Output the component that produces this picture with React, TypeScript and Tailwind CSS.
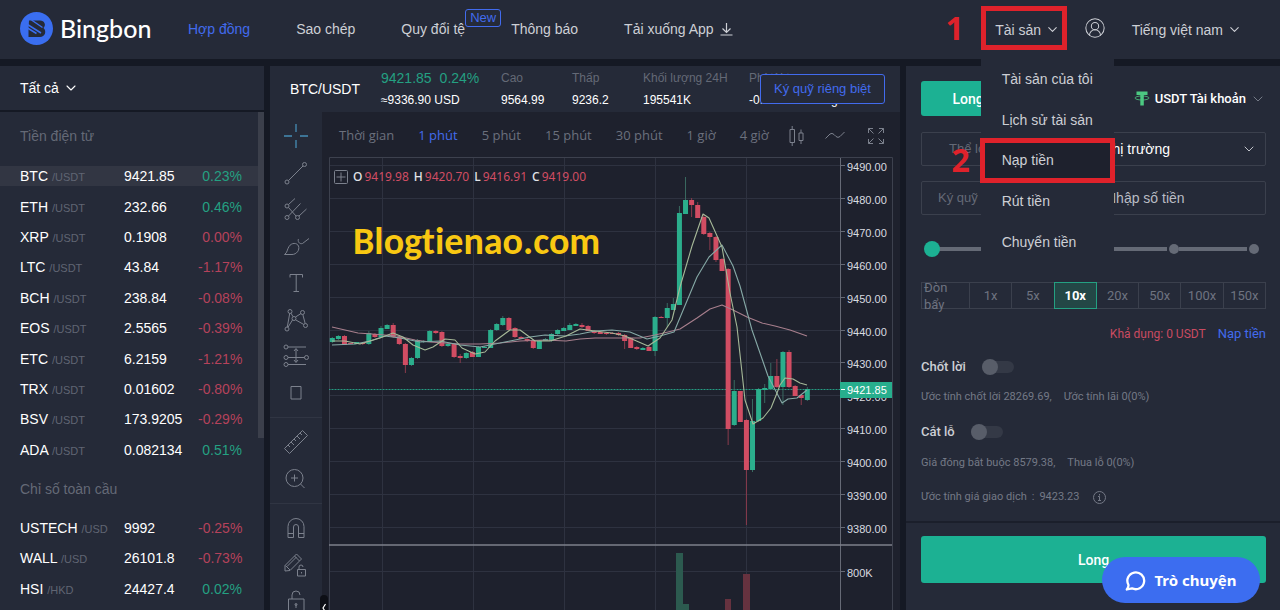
import type { ReactNode } from "react";
import { ChevronDown, CircleUserRound } from "lucide-react";

type Row = [symbol: string, quote: string, price: string, change: string];

const CRYPTO: Row[] = [
  ["BTC", "USDT", "9421.85", "0.23%"],
  ["ETH", "USDT", "232.66", "0.46%"],
  ["XRP", "USDT", "0.1908", "0.00%"],
  ["LTC", "USDT", "43.84", "-1.17%"],
  ["BCH", "USDT", "238.84", "-0.08%"],
  ["EOS", "USDT", "2.5565", "-0.39%"],
  ["ETC", "USDT", "6.2159", "-1.21%"],
  ["TRX", "USDT", "0.01602", "-0.80%"],
  ["BSV", "USDT", "173.9205", "-0.29%"],
  ["ADA", "USDT", "0.082134", "0.51%"],
];

const INDICES: Row[] = [
  ["USTECH", "USD", "9992", "-0.25%"],
  ["WALL", "USD", "26101.8", "-0.73%"],
  ["HSI", "HKD", "24427.4", "0.02%"],
];

const isDown = (change: string) => change.startsWith("-") || change === "0.00%";

function MarketTable({ rows, label, className, active }: { rows: Row[]; label: string; className: string; active?: string }) {
  return (
    <table aria-label={label} className={`w-full table-fixed border-separate border-spacing-x-0 border-spacing-y-[10px] text-sm leading-5 text-white ${className}`}>
      <tbody>
        {rows.map(([symbol, quote, price, change]) => (
          <tr key={symbol} className={symbol === active ? "bg-[#323643]" : ""}>
            <td className="w-[124px] p-0 pl-5 whitespace-nowrap">
              {symbol} <span className="text-[11px] leading-none text-[#606573]">/{quote}</span>
            </td>
            <td className="p-0">{price}</td>
            <td className={`w-[60px] p-0 pr-4 text-right ${isDown(change) ? "text-[#b5425b]" : "text-[#24a082]"}`}>{change}</td>
          </tr>
        ))}
      </tbody>
    </table>
  );
}

/* top, bottom, high, low, rising */
type Candle = [number, number, number, number, 0 | 1];
const CANDLES: Candle[] = [
  [338, 342, 337, 343, 1], [336, 339, 335, 340, 1], [336, 345, 335, 345, 0], [343, 344, 343, 344, 0],
  [342, 344, 342, 344, 1], [343, 344, 342, 345, 0], [333, 344, 331, 345, 1], [334, 337, 333, 338, 0],
  [328, 337, 326, 338, 1], [325, 329, 324, 329, 1], [325, 337, 323, 338, 0], [337, 344, 336, 345, 0],
  [344, 365, 343, 373, 0], [358, 365, 357, 366, 1], [340, 358, 339, 359, 1], [341, 342, 340, 343, 1],
  [331, 342, 330, 342, 1], [331, 333, 330, 334, 0], [332, 346, 331, 347, 0], [344, 346, 343, 347, 1],
  [344, 357, 343, 358, 0], [356, 358, 354, 363, 0], [353, 358, 352, 359, 1], [352, 357, 351, 357, 0],
  [347, 357, 346, 357, 1], [347, 348, 346, 348, 1], [330, 348, 329, 348, 1], [324, 330, 323, 331, 1],
  [318, 325, 316, 326, 1], [318, 330, 317, 331, 0], [328, 337, 327, 338, 0], [337, 339, 336, 339, 0],
  [339, 341, 338, 342, 0], [341, 348, 340, 349, 0], [341, 349, 340, 349, 1], [339, 341, 338, 341, 1],
  [334, 341, 333, 342, 1], [330, 334, 329, 335, 1], [328, 331, 327, 331, 1], [325, 330, 323, 330, 1],
  [324, 326, 323, 326, 1], [325, 327, 323, 328, 0], [326, 331, 325, 331, 0], [331, 333, 330, 334, 0],
  [332, 334, 331, 334, 0], [333, 334, 332, 335, 0], [333, 334, 332, 334, 0], [333, 335, 332, 336, 0],
  [335, 341, 334, 349, 0], [338, 348, 337, 348, 0], [347, 349, 346, 350, 0], [348, 350, 347, 350, 1],
  [347, 351, 346, 351, 0], [317, 351, 316, 356, 1], [317, 318, 316, 318, 0], [308, 318, 303, 327, 1],
  [304, 310, 298, 310, 1], [213, 305, 206, 305, 1], [200, 214, 177, 214, 1], [200, 205, 198, 217, 0],
  [205, 218, 202, 218, 0], [217, 234, 214, 235, 0], [233, 237, 232, 250, 0], [237, 260, 236, 262, 0],
  [259, 271, 258, 271, 0], [269, 429, 268, 445, 0], [391, 425, 380, 426, 1], [391, 422, 391, 422, 0],
  [420, 470, 419, 525, 0], [421, 470, 399, 472, 1], [389, 421, 388, 422, 1], [388, 390, 384, 403, 1],
  [376, 389, 363, 390, 1], [376, 387, 359, 388, 0], [352, 387, 351, 405, 1], [352, 387, 350, 388, 0],
  [386, 396, 385, 396, 0], [395, 398, 394, 405, 0], [389, 400, 387, 401, 1],
];

const FIRST_X = 332.3;
const STEP = 6.09;
const PRICES = ["9490", "9480", "9470", "9460", "9450", "9440", "9430", "9420", "9410", "9400", "9390", "9380"];
const priceY = (i: number) => Math.round(165 + i * 32.9) + 0.5;

function PriceChart() {
  return (
    <svg viewBox="328 157 565 453" preserveAspectRatio="xMinYMin meet" className="block w-full font-['Liberation_Sans',sans-serif]" role="img" aria-label="BTC/USDT">
      <g stroke="#2e3240" fill="none">
        {PRICES.map((p, i) => <path key={p} d={`M329 ${priceY(i)}H840`} />)}
        <path d="M329 571.5H840" />
        {[382, 473, 564, 655, 746].map((x) => <path key={x} d={`M${x + 0.5} 158V610`} />)}
      </g>
      <path d="M329.5 610V157.5H892.5V610" fill="none" stroke="#3d414e" />
      <g fill="#2c5a4f">
        <rect x="676" y="553" width="7" height="60" />
        <rect x="683" y="604" width="6" height="10" />
      </g>
      <g fill="#66323f">
        <rect x="725" y="599" width="6" height="14" />
        <rect x="743" y="574" width="7" height="40" />
      </g>
      <path d="M329 389.5H840" stroke="#20605a" />
      <path d="M329 389.5H840" stroke="#269c80" strokeDasharray="1 2" />
      {CANDLES.map(([top, bottom, high, low, up], i) => {
        const x = FIRST_X + i * STEP;
        return (
          <g key={i}>
            <path d={`M${x} ${high}V${low}`} stroke={up ? "#3a6a61" : "#8a3b4c"} />
            <rect x={x - 2.5} y={top} width="5" height={bottom - top} fill={up ? "#2bae8c" : "#d14d63"} />
          </g>
        );
      })}
      <g fill="none" strokeWidth="1.1" strokeLinejoin="round">
        <path stroke="#a87f8d" d="M332 327 345 330 358 333 372 334 397 336 415 340 430 342 460 344 480 344 500 343 520 341 545 340 566 341 580 339 595 338 640 338 655 335 668 332 680 329 697 318 710 309 722 305 733 310 747 317 762 323 775 326 790 330 807 336" />
        <path stroke="#86a9a6" d="M332 345 355 344 370 341 385 336 400 338 420 342 440 341 460 345 480 347 495 344 510 341 530 337 545 335 565 336 580 334 595 331 612 330 630 332 647 339 660 336 674 332 684 308 697 277 709 257 722 245 733 266 740 286 752 330 768 376 782 403 788 399 797 398 807 390" />
        <path stroke="#a6b998" d="M332 341 345 341 360 344 380 338 393 333 403 337 413 345 425 350 433 347 445 339 455 340 462 348 475 354 485 352 495 341 510 330 520 330 535 341 550 341 566 336 580 329 595 331 612 333 625 336 648 346 660 338 672 320 680 287 692 246 703 214 709 218 722 247 730 293 737 327 745 400 753 424 763 418 771 408 777 393 780 385 785 378 793 379 800 383 807 385" />
      </g>
      <path d="M840.5 158V610" stroke="#666a76" />
      <path d="M329 545H892" stroke="#7e818b" strokeWidth="1.5" />
      <g fill="#d9dbe0" fontSize="11">
        {PRICES.map((p, i) => (
          <g key={p}>
            <path d={`M841 ${priceY(i)}h4`} stroke="#666a76" />
            <text x="847" y={priceY(i) + 5}>{p}.00</text>
          </g>
        ))}
        <path d="M841 571.5h4" stroke="#666a76" />
        <text x="847" y="577">800K</text>
      </g>
      <rect x="840" y="382" width="52" height="16" fill="#27ae8d" />
      <path d="M841 389.5h4" stroke="#fff" />
      <text x="847" y="394" fontSize="11" fill="#fff">9421.85</text>
    </svg>
  );
}

function Tool({ name, children, className = "text-[#7c818d]" }: { name: string; children: ReactNode; className?: string }) {
  return (
    <button type="button" aria-label={name} className={`flex flex-1 items-center justify-center ${className}`}>
      <svg width="28" height="28" viewBox="0 0 28 28" fill="none" stroke="currentColor" strokeWidth="1">
        {children}
      </svg>
    </button>
  );
}

function Toolbar() {
  return (
    <div className="relative flex w-[52px] shrink-0 flex-col bg-[#252a38] pt-[6px]">
      <div className="flex h-[293px] shrink-0 flex-col">
        <Tool name="Crosshair" className="text-[#468db5]">
          <path strokeWidth="1.3" d="M14 2v8M14 18v8M2 14h8M18 14h8" />
        </Tool>
        <Tool name="Trend line">
          <circle cx="5" cy="23" r="2" /><circle cx="22.500" cy="5.500" r="2" /><path d="M6.500 21.500 21 7" />
        </Tool>
        <Tool name="Pitchfork">
          <circle cx="5" cy="10" r="2" /><circle cx="5" cy="21.500" r="2" /><circle cx="15.500" cy="21.500" r="2" />
          <path d="m6.500 8.500 6.500-6M6.500 20 18.500 7.500M17 20l7.500-7M6.500 11.500l7.500 8.500" />
        </Tool>
        <Tool name="Brush">
          <path d="M2.500 22.500c3-2 2.500-5 4.500-8 2.500-4 8-4 9.500-.5 1.500 4-2 8.500-6.500 8.500zM16.500 7c-1 2 .5 5.500 4 4.500l6.500-5" />
        </Tool>
        <Tool name="Text">
          <path d="M8 8.500V5.500h12.500v3M14.200 5.500v17M11.500 22.500h5.500" />
        </Tool>
        <Tool name="Pattern">
          <circle cx="5" cy="24" r="2" /><circle cx="8" cy="6.500" r="2" /><circle cx="12" cy="13.500" r="2" /><circle cx="20.500" cy="7.500" r="2" /><circle cx="23.500" cy="20.500" r="2" />
          <path d="M5.300 22 7.700 8.500M9 8.200l2 3.500M13.500 12l5.500-3.500M20.800 9.500l2.400 9M13.500 14.800l8.300 4.700M10.500 15 6 22.200" />
        </Tool>
        <Tool name="Forecast">
          <circle cx="4" cy="5" r="2" /><circle cx="4" cy="15.500" r="2" /><circle cx="24.500" cy="15.500" r="2" /><circle cx="4" cy="22.500" r="2" />
          <path d="M6 5h18M6 15.500h16.500M6 22.500h18M14 7v13M12 9l2-2.500L16 9M12 18l2 2.500 2-2.500" />
        </Tool>
        <Tool name="Rectangle">
          <path d="M9 7.500h10v12.500H9z" />
        </Tool>
      </div>
      <hr className="my-[6px] w-full shrink-0 border-[#303543]" />
      <div className="flex h-[73px] shrink-0 flex-col">
        <Tool name="Measure">
          <path d="m2.500 20.500 18-18 5 5-18 18zM6 17l2 2M9 14l3 3M12 11l2 2M15 8l3 3M18 5l2 2" />
        </Tool>
        <Tool name="Zoom in">
          <circle cx="12.500" cy="13" r="8.500" /><path d="M12.500 9.500v7M9 13h7M18.500 19l4 4" />
        </Tool>
      </div>
      <hr className="my-[6px] w-full shrink-0 border-[#303543]" />
      <div className="flex h-[110px] shrink-0 flex-col">
        <Tool name="Magnet">
          <path d="M6 23.500V12.500a8 8 0 0 1 16 0v11h-5.500V13a2.500 2.500 0 0 0-5 0v10.500zM6 19.500h5.500M16.500 19.500H22" />
        </Tool>
        <Tool name="Lock drawing">
          <path d="M3 20v-5.500L14.500 3l5 5L8 19.500zM12.500 5l5 5M5 15.500l9.500-9.500M3.500 14.500 8 19M15.500 18.500h8v6.500h-8zM17 18.500v-2.500a2 2 0 0 1 4 0M19.500 21v1.500" />
        </Tool>
        <Tool name="Unlock">
          <path d="M6.500 11h15.500v13.500H6.500zM10 11V7a4 4 0 0 1 8 0M14 16v4" /><circle cx="14" cy="16.500" r="1" />
        </Tool>
      </div>
      <button type="button" aria-label="Collapse" className="absolute top-[483px] left-[50px] z-10 h-8 w-2 overflow-hidden rounded-t bg-[#0d0f16]">
        <svg width="8" height="32" viewBox="0 0 8 32" fill="none" stroke="#fff" strokeWidth="1.2"><path d="M5.500 9 3 13l2.500 4" /></svg>
      </button>
    </div>
  );
}

function Header() {
  return (
    <header className="relative z-20 flex h-[59px] shrink-0 items-center bg-[#252a38] pr-[38px] pb-[3px] pl-5 text-sm text-[#cdcfd5]">
      <a href="#" className="flex w-[168px] items-center gap-[7px] text-white" aria-label="Bingbon">
        <svg width="33" height="33" viewBox="0 0 33 33">
          <circle cx="16.500" cy="16.500" r="16.500" fill="#3a6ef0" />
          <path fill="#252a38" d="M9 8.500h11c4.500 0 6.500 4.500 3.500 7.500 3.500 3 1.500 9-3.500 9H8.500v-8z" />
          <path d="m11.500 8 11 7.500M7.500 12.500 21 21M7.500 16l9 5.500" stroke="#3a6ef0" strokeWidth="1.500" fill="none" />
        </svg>
        <span className="font-[Lato,sans-serif] text-[25px] leading-8 font-medium">Bingbon</span>
      </a>
      <nav className="flex items-center gap-[46px] pt-0.5 whitespace-nowrap">
        <a href="#" className="text-[#426bed]">Hợp đồng</a>
        <a href="#">Sao chép</a>
        <a href="#" className="relative">
          Quy đổi tệ
          <span className="absolute -top-[10px] left-full rounded-[3px] border border-[#426bed] px-1 text-[13px] leading-4 text-[#426bed]">New</span>
        </a>
        <a href="#">Thông báo</a>
        <a href="#" className="flex items-center gap-[6px]">
          Tải xuống App
          <svg width="13" height="14" viewBox="0 0 13 14" fill="none" stroke="currentColor" strokeWidth="1.200"><path d="M6.500 1v9M2.500 6.500l4 4 4-4M.5 13h12" /></svg>
        </a>
      </nav>
      <div className="ml-auto flex items-center whitespace-nowrap">
        <span className="mr-[17px] font-['Open_Sans',sans-serif] text-[32px] leading-10 font-bold text-[#df222b]">1</span>
        <div className="relative mr-[17px]">
          <button type="button" aria-expanded="true" className="flex h-11 w-[86px] items-center justify-center gap-1 border-[5px] border-[#df222b] pt-[3px] pl-2">
            Tài sản <ChevronDown size={15} strokeWidth={1.7} />
          </button>
          <div role="menu" className="absolute top-[53px] left-0 flex h-[203px] w-[133px] flex-col bg-[#252a38]">
            <a href="#" role="menuitem" className="flex flex-1 items-center pl-[21px]">Tài sản của tôi</a>
            <a href="#" role="menuitem" className="flex flex-1 items-center pl-[21px]">Lịch sử tài sản</a>
            <a href="#" role="menuitem" className="relative flex flex-1 items-center bg-[#1e212d] pl-[21px]">
              Nạp tiền
              <span className="absolute -inset-x-px -inset-y-0.5 border-[5px] border-[#df222b]" />
              <span className="absolute right-full mr-[11px] font-['Open_Sans',sans-serif] text-[32px] leading-10 font-bold text-[#df222b]">2</span>
            </a>
            <a href="#" role="menuitem" className="flex flex-1 items-center pl-[21px]">Rút tiền</a>
            <a href="#" role="menuitem" className="flex flex-1 items-center pl-[21px]">Chuyển tiền</a>
          </div>
        </div>
        <button type="button" aria-label="Tài khoản" className="mr-[26px]"><CircleUserRound size={22} strokeWidth={1.1} /></button>
        <button type="button" className="flex items-center gap-1 pt-[3px]">Tiếng việt nam <ChevronDown size={15} strokeWidth={1.7} /></button>
      </div>
    </header>
  );
}

function Stat({ label, value, className }: { label: string; value: string; className: string }) {
  return (
    <div className={`flex shrink-0 flex-col ${className}`}>
      <span className="text-[#646976]">{label}</span>
      <span className="text-white">{value}</span>
    </div>
  );
}

const INTERVALS = ["Thời gian", "1 phút", "5 phút", "15 phút", "30 phút", "1 giờ", "4 giờ"];

function ChartPanel() {
  return (
    <main className="flex min-w-0 flex-1 flex-col bg-[#1e212d]">
      <div className="relative flex h-[46px] shrink-0 items-center overflow-hidden bg-[#252a38] pl-5 text-xs leading-[22px] whitespace-nowrap">
        <span className="w-[91px] shrink-0 text-sm text-white">BTC/USDT</span>
        <div className="flex w-[120px] shrink-0 flex-col">
          <span className="flex gap-2 text-sm leading-[22px] text-[#24a082]"><span>9421.85</span><span>0.24%</span></span>
          <span className="text-white">≈9336.90 USD</span>
        </div>
        <Stat label="Cao" value="9564.99" className="w-[71px]" />
        <Stat label="Thấp" value="9236.2" className="w-[71px]" />
        <Stat label="Khối lượng 24H" value="195541K" className="w-[106px]" />
        <Stat label="Phí tài trợ" value="-0.0100% / trong" className="w-[120px]" />
        <button type="button" className="absolute top-2 right-[15px] h-[30px] w-[125px] rounded-[3px] border border-[#426bed] bg-[#252a38] text-[13px] text-[#426bed]">
          Ký quỹ riêng biệt
        </button>
      </div>
      <div className="flex min-h-0 flex-1">
        <Toolbar />
        <div className="flex min-w-0 flex-1 flex-col pr-[7px] pl-[6px]">
          <div className="flex h-[45px] shrink-0 items-center gap-5 pt-[3px] pl-[11px] font-['Open_Sans',sans-serif] text-[13px] whitespace-nowrap text-[#6b707d]">
            <div className="flex gap-6">
              {INTERVALS.map((label) => (
                <button key={label} type="button" className={label === "1 phút" ? "text-[#426bed]" : ""}>{label}</button>
              ))}
            </div>
            <button type="button" aria-label="Candles">
              <svg width="16" height="20" viewBox="0 0 16 20" fill="none" stroke="#7c818d"><path d="M1 3.500h4.500v13H1zM3.200 0v3.500M3.200 16.500V20M10 7h4v7.500h-4zM12 3.500V7M12 14.500V18" /></svg>
            </button>
            <button type="button" aria-label="Line">
              <svg width="20" height="10" viewBox="0 0 20 10" fill="none" stroke="#7c818d"><path d="M.5 7.500 5 3q2-1.500 4 .5l2 2q2 1.800 4 0L19.500 1" /></svg>
            </button>
            <button type="button" aria-label="Fullscreen" className="mr-2 ml-auto">
              <svg width="18" height="18" viewBox="0 0 18 18" fill="none" stroke="#7c818d"><path d="M1.500 6V1.500H6M12 1.500h4.500V6M16.500 12v4.500H12M6 16.500H1.500V12M1.500 1.500l5 5M16.500 1.500l-5 5M16.500 16.500l-5-5M1.500 16.500l5-5" /></svg>
            </button>
          </div>
          <div className="relative min-h-0 flex-1 overflow-hidden">
            <PriceChart />
            <div className="absolute top-[11px] left-[6px] flex items-center gap-[5px] font-['Noto_Sans',sans-serif] text-xs leading-[18px] whitespace-nowrap text-[#d14d63]">
              <svg width="14" height="14" viewBox="0 0 14 14" fill="none" stroke="#7c818d"><rect x=".5" y=".5" width="13" height="13" rx="1" /><path d="M7 2.500v9M2.500 7h9" /></svg>
              <span><b className="mr-0.5 font-medium text-[#e3e4e8]">O</b>9419.98</span>
              <span><b className="mr-0.5 font-medium text-[#e3e4e8]">H</b>9420.70</span>
              <span><b className="mr-0.5 font-medium text-[#e3e4e8]">L</b>9416.91</span>
              <span><b className="mr-0.5 font-medium text-[#e3e4e8]">C</b>9419.00</span>
            </div>
            <div className="absolute top-[64px] left-[25px] font-[Carlito,Lato,sans-serif] text-[38px] leading-10 font-bold text-[#f9c812] [font-variant-ligatures:none]">Blogtienao.com</div>
          </div>
        </div>
      </div>
    </main>
  );
}

function Switch({ label }: { label: string }) {
  return (
    <label className="flex h-5 items-center gap-4 text-[13px] font-medium text-[#cdcfd5]">
      {label}
      <input
        type="checkbox"
        role="switch"
        className="relative h-3 w-8 appearance-none rounded-full bg-[#343946] before:absolute before:-top-0.5 before:left-0 before:size-4 before:rounded-full before:bg-[#585d69] before:content-['']"
      />
    </label>
  );
}

const LEVERAGE = ["1x", "5x", "10x", "20x", "50x", "100x", "150x"];

function OrderPanel() {
  return (
    <aside className="flex w-[374px] shrink-0 flex-col bg-[#252a38] font-[Roboto,sans-serif] whitespace-nowrap">
      <div className="flex h-[457px] shrink-0 flex-col border-b-2 border-[#1b1f2b] pt-[15px] pr-[14px] pl-[15px]">
        <div className="flex h-[35px] shrink-0 items-center">
          <button type="button" className="h-full w-[94px] rounded-l-[3px] bg-[#1cb193] text-sm font-medium text-white">Long</button>
          <button type="button" className="h-full w-[94px] rounded-r-[3px] bg-[#323643] text-sm text-[#7c818d]">Short</button>
          <button type="button" className="ml-auto flex items-center gap-1 text-[13px] font-medium text-white">
            <svg width="16" height="15" viewBox="0 0 16 15"><path d="M2.500.5h11v3.500H9.800v10.500H6.300V4H2.500z" fill="#4cc982" /><ellipse cx="8" cy="7" rx="7" ry="2" fill="none" stroke="#4cc982" strokeWidth=".8" /></svg>
            <span className="ml-px">USDT Tài khoản</span>
            <ChevronDown size={16} strokeWidth={1.4} className="text-[#7c818d]" />
          </button>
        </div>
        <div className="mt-4 flex h-[34px] shrink-0 items-center rounded-[2px] border border-[#3b404d] font-['Liberation_Sans',sans-serif]">
          <label htmlFor="kind" className="w-[87px] pl-[27px] text-[13px] text-[#646976]">Thể loại</label>
          <select id="kind" className="h-full min-w-0 flex-1 appearance-none bg-transparent pl-[95px] text-sm text-white">
            <option>Thị trường</option>
          </select>
          <ChevronDown size={16} strokeWidth={1.4} className="mr-2 text-[#cdcfd5]" />
        </div>
        <div className="mt-[15px] flex h-[34px] shrink-0 items-center rounded-[2px] border border-[#3b404d] font-['Liberation_Sans',sans-serif]">
          <label htmlFor="margin" className="w-[87px] pl-4 text-[13px] text-[#646976]">Ký quỹ</label>
          <input id="margin" placeholder="Nhập số tiền" className="h-full min-w-0 flex-1 bg-transparent pl-[97px] text-sm text-white outline-none placeholder:text-[#b9bcc4]" />
        </div>
        <div className="relative mt-[26px] mr-1 ml-[3px] h-4 shrink-0">
          <div className="flex h-4 items-center justify-between px-[3px]">
            {[0, 25, 50, 75, 100].map((stop) => (
              <span key={stop} className={stop === 0 ? "size-[10px]" : "flex flex-1 items-center gap-0.5"}>
                {stop > 0 && <span className="h-1 flex-1 bg-[#656a76]" />}
                {stop > 0 && <span className="size-[10px] rounded-full bg-[#656a76]" />}
              </span>
            ))}
          </div>
          <input
            type="range"
            aria-label="Ký quỹ"
            defaultValue={0}
            className="absolute inset-0 h-4 w-full appearance-none bg-transparent [&::-webkit-slider-thumb]:size-4 [&::-webkit-slider-thumb]:appearance-none [&::-webkit-slider-thumb]:rounded-full [&::-webkit-slider-thumb]:bg-[#1cb193]"
          />
        </div>
        <div className="mt-[25px] flex h-[27px] shrink-0 items-stretch border border-[#3b404d] text-[13px] text-[#6e7380]">
          <span className="w-[47px] self-center pl-0.5 leading-[17px]">Đòn<br />bẩy</span>
          {LEVERAGE.map((x) => (
            <button key={x} type="button" className={x === "10x" ? "relative z-10 -my-px -mr-px flex-1 border border-[#24a082] bg-[#234746] font-bold text-white" : "flex-1 border-l border-[#3b404d]"}>{x}</button>
          ))}
        </div>
        <div className="mt-[15px] flex h-5 shrink-0 items-center justify-end gap-3 text-xs text-[#c94b61]">
          <span>Khả dụng: 0 USDT</span>
          <a href="#" className="text-[13px] text-[#426bed]">Nạp tiền</a>
        </div>
        <div className="mt-[13px]"><Switch label="Chốt lời" /></div>
        <p className="mt-[10px] flex h-5 shrink-0 items-center gap-3 text-[11px] text-[#747986]"><span>Ước tính chốt lời 28269.69,</span><span>Ước tính lãi 0(0%)</span></p>
        <div className="mt-[15px]"><Switch label="Cắt lỗ" /></div>
        <p className="mt-[11px] flex h-5 shrink-0 items-center gap-3 text-[11px] text-[#747986]"><span>Giá đóng bắt buộc 8579.38,</span><span>Thua lỗ 0(0%)</span></p>
        <p className="mt-[14px] flex h-5 shrink-0 items-center gap-[14px] text-[11px] text-[#747986]">
          <span className="flex gap-[5px]"><span>Ước tính giá giao dịch</span><span>:</span><span>9423.23</span></span>
          <svg width="13" height="13" viewBox="0 0 13 13" fill="none" stroke="currentColor"><circle cx="6.500" cy="6.500" r="6" /><path d="M6.500 3v1.500M5 5.500h1.500v4M5 9.500h3" /></svg>
        </p>
      </div>
      <div className="pt-[13px] pr-[14px] pl-[15px]">
        <button type="button" className="h-[47px] w-full rounded-[3px] bg-[#1cb193] text-sm font-medium text-white">Long</button>
      </div>
    </aside>
  );
}

export default function App() {
  return (
    <div className="flex h-screen flex-col overflow-hidden bg-[#151924] font-['Liberation_Sans',Arial,sans-serif]">
      <Header />
      <div className="mt-[7px] flex min-h-0 flex-1 gap-[6px]">
        <aside className="flex w-[264px] shrink-0 flex-col overflow-hidden bg-[#252a38]">
          <button type="button" className="flex h-11 shrink-0 items-center gap-1 pl-5 text-sm text-white">
            Tất cả <ChevronDown size={16} strokeWidth={1.6} />
          </button>
          <div className="flex min-h-0 flex-1 border-t-2 border-[#151924]">
            <div className="min-w-0 flex-1">
              <h2 className="mt-[5px] pl-5 text-sm leading-[39px] text-[#646976]">Tiền điện tử</h2>
              <MarketTable rows={CRYPTO} label="Tiền điện tử" active="BTC" className="h-[314px]" />
              <h2 className="pl-5 text-sm leading-[38px] text-[#646976]">Chỉ số toàn cầu</h2>
              <MarketTable rows={INDICES} label="Chỉ số toàn cầu" className="h-[101px]" />
            </div>
            <div className="h-[326px] w-[6px] bg-[#3b3f4b]" />
          </div>
        </aside>
        <ChartPanel />
        <OrderPanel />
      </div>
      <button type="button" className="fixed right-5 bottom-[7px] z-30 flex h-[46px] w-[158px] items-center justify-center gap-2 rounded-full bg-[#3c6df0] font-['Noto_Sans',sans-serif] text-[15px] font-bold text-white">
        <svg width="21" height="21" viewBox="0 0 21 21" fill="none" stroke="currentColor" strokeWidth="2.300" strokeLinejoin="round"><path d="M3.500 15A8.400 8.400 0 1 1 7 18.300L1.800 19.500C3 18 3.600 16.500 3.500 15z" /></svg>
        Trò chuyện
      </button>
    </div>
  );
}
